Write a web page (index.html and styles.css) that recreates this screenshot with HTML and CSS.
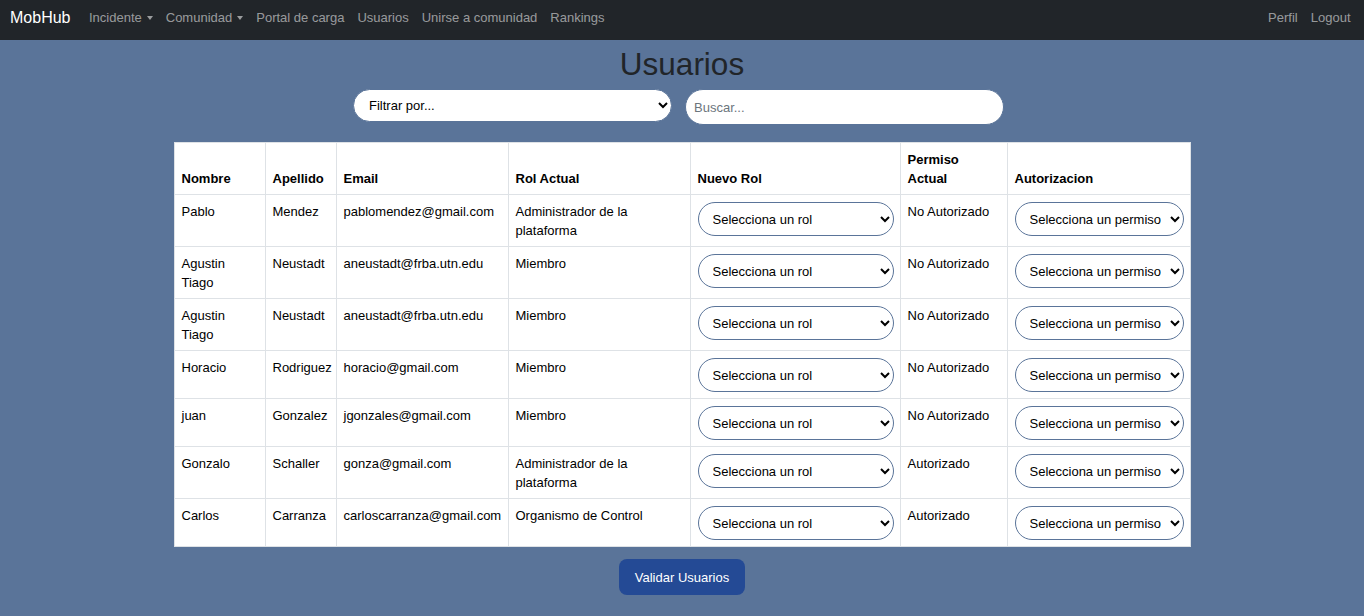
FILE: index.html
```html
<!DOCTYPE html>
<html lang="es">
<head>
<meta charset="utf-8">
<title>Usuarios - MobHub</title>
<link rel="stylesheet" href="styles.css">
</head>
<body>
<nav class="navbar">
  <div class="nav-left">
    <a class="brand" href="#">MobHub</a>
    <a class="nav-link" href="#">Incidente <span class="caret"></span></a>
    <a class="nav-link" href="#">Comunidad <span class="caret"></span></a>
    <a class="nav-link" href="#">Portal de carga</a>
    <a class="nav-link" href="#">Usuarios</a>
    <a class="nav-link" href="#">Unirse a comunidad</a>
    <a class="nav-link" href="#">Rankings</a>
  </div>
  <div class="nav-right">
    <a class="nav-link" href="#">Perfil</a>
    <a class="nav-link" href="#">Logout</a>
  </div>
</nav>
<main class="main">
  <h1 class="title">Usuarios</h1>
  <div class="filters">
    <select class="filter-select"><option>Filtrar por...</option></select>
    <input class="search" type="text" placeholder="Buscar...">
  </div>
  <table class="users">
    <colgroup>
      <col class="c-nombre"><col class="c-apellido"><col class="c-email"><col class="c-rol"><col class="c-nuevo"><col class="c-permiso"><col class="c-auth">
    </colgroup>
    <thead>
      <tr><th>Nombre</th><th>Apellido</th><th>Email</th><th>Rol Actual</th><th>Nuevo Rol</th><th>Permiso Actual</th><th>Autorizacion</th></tr>
    </thead>
    <tbody>
      <tr><td>Pablo</td><td>Mendez</td><td>pablomendez@gmail.com</td><td>Administrador de la plataforma</td><td><select class="cell-select"><option>Selecciona un rol</option></select></td><td>No Autorizado</td><td><select class="cell-select"><option>Selecciona un permiso</option></select></td></tr>
      <tr><td>Agustin Tiago</td><td>Neustadt</td><td>aneustadt@frba.utn.edu</td><td>Miembro</td><td><select class="cell-select"><option>Selecciona un rol</option></select></td><td>No Autorizado</td><td><select class="cell-select"><option>Selecciona un permiso</option></select></td></tr>
      <tr><td>Agustin Tiago</td><td>Neustadt</td><td>aneustadt@frba.utn.edu</td><td>Miembro</td><td><select class="cell-select"><option>Selecciona un rol</option></select></td><td>No Autorizado</td><td><select class="cell-select"><option>Selecciona un permiso</option></select></td></tr>
      <tr><td>Horacio</td><td>Rodriguez</td><td>horacio@gmail.com</td><td>Miembro</td><td><select class="cell-select"><option>Selecciona un rol</option></select></td><td>No Autorizado</td><td><select class="cell-select"><option>Selecciona un permiso</option></select></td></tr>
      <tr><td>juan</td><td>Gonzalez</td><td>jgonzales@gmail.com</td><td>Miembro</td><td><select class="cell-select"><option>Selecciona un rol</option></select></td><td>No Autorizado</td><td><select class="cell-select"><option>Selecciona un permiso</option></select></td></tr>
      <tr><td>Gonzalo</td><td>Schaller</td><td>gonza@gmail.com</td><td>Administrador de la plataforma</td><td><select class="cell-select"><option>Selecciona un rol</option></select></td><td>Autorizado</td><td><select class="cell-select"><option>Selecciona un permiso</option></select></td></tr>
      <tr><td>Carlos</td><td>Carranza</td><td>carloscarranza@gmail.com</td><td>Organismo de Control</td><td><select class="cell-select"><option>Selecciona un rol</option></select></td><td>Autorizado</td><td><select class="cell-select"><option>Selecciona un permiso</option></select></td></tr>
    </tbody>
  </table>
  <div class="actions">
    <button class="btn-validar" type="button">Validar Usuarios</button>
  </div>
</main>
</body>
</html>
```
FILE: styles.css
```css
* { box-sizing: border-box; }
html, body { margin: 0; padding: 0; }
body {
  background: #5a7499;
  font-family: "Liberation Sans", Arial, sans-serif;
  color: #000;
  height: 616px;
  overflow: hidden;
}
.navbar {
  height: 40px;
  background: #212529;
  display: flex;
  justify-content: space-between;
  align-items: center;
  padding: 0 7px 5px 10px;
}
.nav-left, .nav-right { display: flex; align-items: center; }
.brand {
  color: #fff;
  text-decoration: none;
  font-size: 16px;
  margin-right: 12px;
}
.nav-link {
  color: rgba(255,255,255,0.55);
  text-decoration: none;
  font-size: 13px;
  padding: 0 6.5px;
  display: flex;
  align-items: center;
}
.caret {
  display: inline-block;
  width: 0; height: 0;
  margin-left: 5px;
  border-left: 3.5px solid transparent;
  border-right: 3.5px solid transparent;
  border-top: 4px solid rgba(255,255,255,0.55);
}
.main { padding-top: 6px; }
.title {
  margin: 0;
  text-align: center;
  font-weight: 400;
  font-size: 31.5px;
  line-height: 36px;
  color: #212529;
}
.filters {
  display: flex;
  justify-content: center;
  align-items: flex-start;
  gap: 13px;
  margin-top: 7px;
  padding-right: 7px;
}
.filter-select {
  width: 319px;
  height: 33px;
  border-radius: 17px;
  border: 1px solid #5a7499;
  background: #fff;
  padding: 0 6px 0 11px;
  font-family: inherit;
  font-size: 13px;
  color: #000;
}
.search {
  width: 319px;
  height: 36px;
  border-radius: 18px;
  border: 1px solid #5a7499;
  background: #fff;
  padding: 0 8px;
  font-family: inherit;
  font-size: 13px;
  outline: none;
}
.search::placeholder { color: #6c757d; }
.users {
  margin: 17px auto 0;
  width: 1016px;
  table-layout: fixed;
  border-collapse: collapse;
  background: #fff;
  font-size: 13px;
  line-height: 19px;
}
.c-nombre { width: 91px; }
.c-apellido { width: 71px; }
.c-email { width: 172px; }
.c-rol { width: 182px; }
.c-nuevo { width: 210px; }
.c-permiso { width: 107px; }
.c-auth { width: 183px; }
.users th, .users td {
  border: 1px solid #dee2e6;
  padding: 7px 6px 6px 7px;
  text-align: left;
  vertical-align: top;
}
.users th {
  vertical-align: bottom;
  font-weight: 700;
}
.cell-select {
  width: 100%;
  height: 34px;
  border-radius: 17px;
  border: 1px solid #5a7499;
  background: #fff;
  padding: 0 6px 0 10px;
  font-family: inherit;
  font-size: 13px;
  color: #000;
}
.actions {
  display: flex;
  justify-content: center;
  margin-top: 12px;
}
.btn-validar {
  background: #244a95;
  color: #fff;
  border: none;
  border-radius: 8px;
  height: 36px;
  padding: 0 16px;
  font-family: inherit;
  font-size: 13px;
}
```
